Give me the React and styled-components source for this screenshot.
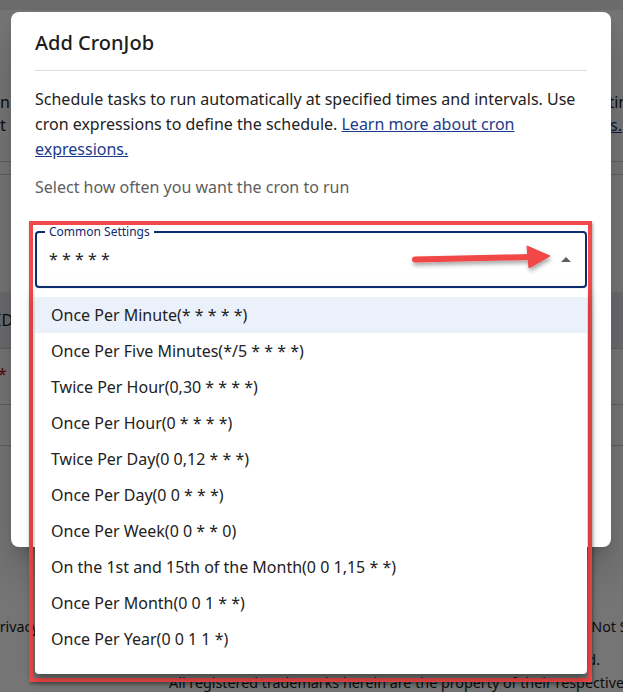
import React from 'react'
import styled, { createGlobalStyle } from 'styled-components'

const options = [
    'Once Per Minute(* * * * *)',
    'Once Per Five Minutes(*/5 * * * *)',
    'Twice Per Hour(0,30 * * * *)',
    'Once Per Hour(0 * * * *)',
    'Twice Per Day(0 0,12 * * *)',
    'Once Per Day(0 0 * * *)',
    'Once Per Week(0 0 * * 0)',
    'On the 1st and 15th of the Month(0 0 1,15 * *)',
    'Once Per Month(0 0 1 * *)',
    'Once Per Year(0 0 1 1 *)',
]

function App() {
    return (
        <>
            <GlobalStyle />
            <Page>
                <HeaderStrip />
                <Intro>
                    <EdgeRow>
                        <span>n</span>
                        <RightClip $shift={-27}>times</RightClip>
                    </EdgeRow>
                    <EdgeRow>
                        <span>t</span>
                        <RightClip as="a">s.</RightClip>
                    </EdgeRow>
                </Intro>
                <Rule $top={24} />
                <Rule $top={12} />
                <TableHead>
                    <LeftClip>ID</LeftClip>
                </TableHead>
                <EdgeRow $top={14}>
                    <Required>*</Required>
                </EdgeRow>
                <Rule $top={18} />
                <Rule $top={40} />
                <Footer>
                    <EdgeRow>
                        <LeftClip $shift={-9}>Privacy</LeftClip>
                        <RightClip $shift={-20}>Do Not Sell</RightClip>
                    </EdgeRow>
                    <EdgeRow $top={10}>
                        <span />
                        <RightClip $shift={23}>reserved.</RightClip>
                    </EdgeRow>
                    <EdgeRow>
                        <span />
                        <RightClip $shift={-1}>All registered trademarks herein are the property of their respective</RightClip>
                    </EdgeRow>
                </Footer>

                <Backdrop />

                <Dialog>
                    <Title>Add CronJob</Title>
                    <Divider />
                    <Intro2>
                        Schedule tasks to run automatically at specified times and intervals. Use
                        cron expressions to define the schedule. <Link href="#">Learn more about cron expressions.</Link>
                    </Intro2>
                    <Hint>Select how often you want the cron to run</Hint>

                    <Frame>
                        <Select>
                            <Label>Common Settings</Label>
                            <Value>* * * * *</Value>
                            <Caret viewBox="0 0 24 24">
                                <path d="m7 14 5-5 5 5z" />
                            </Caret>
                            <Pointer width="150" height="40" viewBox="0 0 150 40">
                                <defs>
                                    <filter id="sh" x="-10%" y="-40%" width="120%" height="200%">
                                        <feDropShadow dx="1" dy="3" stdDeviation="2" floodColor="#000" floodOpacity="0.35" />
                                    </filter>
                                </defs>
                                <g filter="url(#sh)" fill="#f24646" stroke="#f24646">
                                    <line x1="10" y1="19.5" x2="126" y2="17" strokeWidth="6" strokeLinecap="round" />
                                    <polygon points="122,6 145,16 124,28" strokeWidth="1" strokeLinejoin="round" />
                                </g>
                            </Pointer>
                        </Select>
                        <Menu>
                            {options.map((text, i) => (
                                <Option key={text} $active={i === 0}>{text}</Option>
                            ))}
                        </Menu>
                    </Frame>
                </Dialog>
            </Page>
        </>
    )
}

export default App


const GlobalStyle = createGlobalStyle`
    html, body {
        margin: 0;
        padding: 0;
    }
    body {
        font-family: "Noto Sans", "Open Sans", sans-serif;
        color: #222;
    }
    * {
        box-sizing: border-box;
    }
`

const Page = styled.div`
    position: relative;
    width: 623px;
    height: 692px;
    overflow: hidden;
    background: #fff;
    color: #1b1b1b;
    font-size: 16px;
`

const HeaderStrip = styled.div`
    height: 10px;
    background: #ececec;
`

const Intro = styled.div`
    padding-top: 81px;
`

const EdgeRow = styled.div`
    display: flex;
    justify-content: space-between;
    line-height: 23px;
    margin-top: ${props => props.$top || 0}px;
`

const RightClip = styled.span`
    white-space: nowrap;
    margin-right: ${props => props.$shift ?? -22}px;
    color: #1b1b1b;
    a& {
        text-decoration: underline;
        color: #1c3b8c;
        margin-right: 1px;
    }
`

const LeftClip = styled.span`
    white-space: nowrap;
    margin-left: ${props => props.$shift ?? -4}px;
`

const Rule = styled.div`
    height: 1px;
    background: #cfcfcf;
    margin-top: ${props => props.$top}px;
`

const TableHead = styled.div`
    margin-top: 117px;
    height: 57px;
    display: flex;
    align-items: center;
    background: #e7eaef;
    border-bottom: 1px solid #cfcfcf;
`

const Required = styled.span`
    color: #b00020;
    margin-left: -2px;
`

const Footer = styled.div`
    margin-top: 169px;
    font-size: 14.3px;
`

const Backdrop = styled.div`
    position: absolute;
    inset: 0;
    background: rgba(0, 0, 0, 0.54);
`

const Dialog = styled.div`
    position: absolute;
    top: 12px;
    left: 11px;
    width: 600px;
    height: 535px;
    padding: 16px 24px 0;
    background: #fff;
    border-radius: 8px;
    box-shadow: 0 11px 15px -7px rgba(0,0,0,.2), 0 24px 38px 3px rgba(0,0,0,.14);
`

const Title = styled.h2`
    margin: 0;
    font-size: 20px;
    font-weight: 500;
    line-height: 30px;
    color: #1d1d1d;
`

const Divider = styled.div`
    height: 1px;
    margin-top: 12px;
    background: #dedede;
`

const Intro2 = styled.p`
    margin: 16px 0 0;
    font-size: 16px;
    line-height: 1.55;
    color: #222;
`

const Link = styled.a`
    color: #1c3b8c;
    text-decoration: underline;
`

const Hint = styled.p`
    margin: 14px 0 0;
    font-size: 16px;
    line-height: 1.55;
    color: #5e5e5e;
`

const Frame = styled.div`
    margin: 21px -5px 0 -6px;
    padding: 6px 1px 4px 2px;
    border: 4px solid #f24a4a;
    box-shadow: 1px 2px 3px rgba(0,0,0,.35);
    position: relative;
`

const Select = styled.div`
    position: relative;
    height: 57px;
    display: flex;
    align-items: center;
    padding: 0 7px 2px 12px;
    border: 2px solid #0b2c6e;
    border-radius: 4px;
`

const Label = styled.span`
    position: absolute;
    top: -8px;
    left: 8px;
    padding: 0 4px;
    background: #fff;
    font-size: 12px;
    line-height: 14px;
    color: #0b2c6e;
`

const Value = styled.div`
    flex: 1;
    font-size: 16px;
    color: #222;
`

const Caret = styled.svg`
    width: 24px;
    height: 24px;
    fill: #5f5f5f;
    margin-top: 2px;
`

const Pointer = styled.svg`
    position: absolute;
    left: 368px;
    top: 7px;
    overflow: visible;
`

const Menu = styled.div`
    margin-top: 1px;
    padding: 8px 0 17px;
    background: #fff;
    border-radius: 4px;
    box-shadow: 0 5px 5px -3px rgba(0,0,0,.2), 0 8px 10px 1px rgba(0,0,0,.14), 0 3px 14px 2px rgba(0,0,0,.12);
`

const Option = styled.div`
    height: 36px;
    display: flex;
    align-items: center;
    padding: 0 16px;
    font-size: 16px;
    color: #222;
    background: ${props => props.$active ? '#ebf1fb' : 'transparent'};
`
